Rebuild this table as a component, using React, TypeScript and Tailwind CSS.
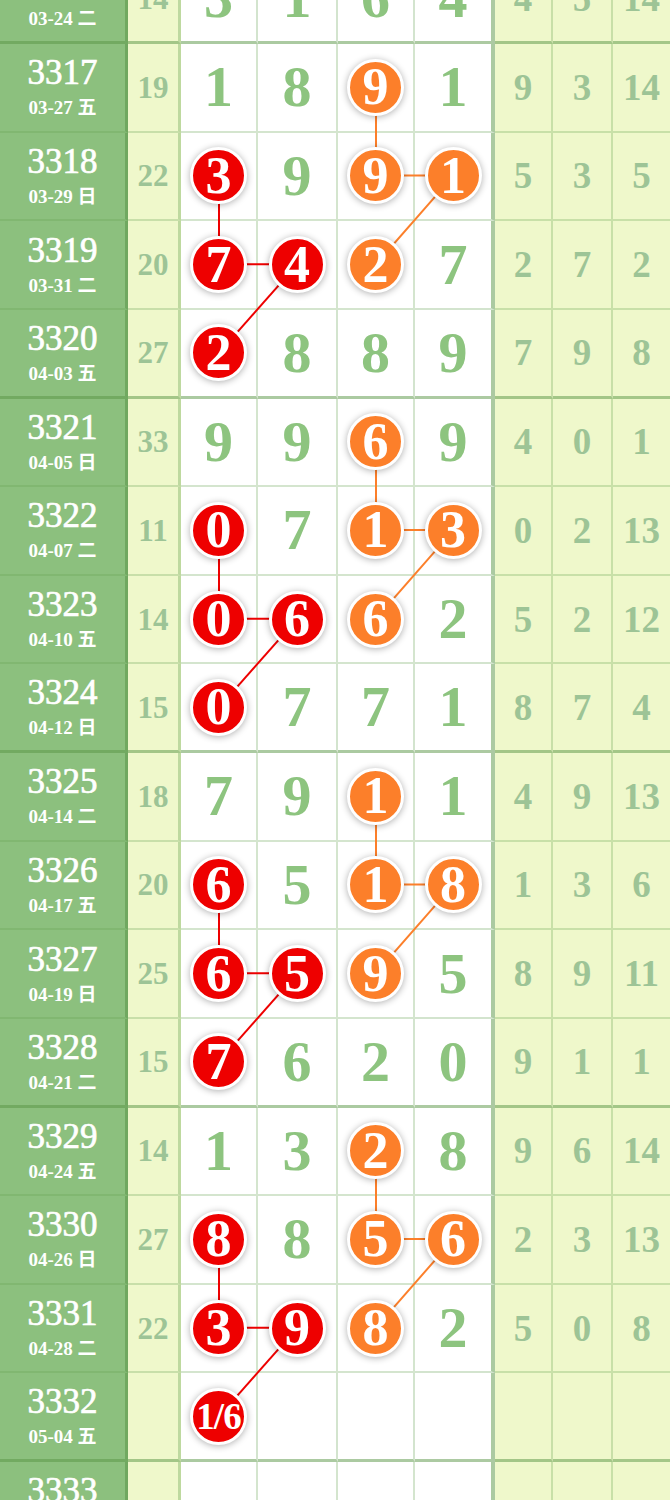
type Mark = "r" | "o" | undefined;

type Row = {
  id: string;
  date: string;
  sum: string;
  nums: string[];
  tail: string[];
};

const ROW_H = 88.625;
const COL_X = [219, 297.5, 376, 453.5];

const rows: Row[] = [
  { id: "3316", date: "03-24 二", sum: "14", nums: ["3", "1", "6", "4"], tail: ["4", "5", "14"] },
  { id: "3317", date: "03-27 五", sum: "19", nums: ["1", "8", "9o", "1"], tail: ["9", "3", "14"] },
  { id: "3318", date: "03-29 日", sum: "22", nums: ["3r", "9", "9o", "1o"], tail: ["5", "3", "5"] },
  { id: "3319", date: "03-31 二", sum: "20", nums: ["7r", "4r", "2o", "7"], tail: ["2", "7", "2"] },
  { id: "3320", date: "04-03 五", sum: "27", nums: ["2r", "8", "8", "9"], tail: ["7", "9", "8"] },
  { id: "3321", date: "04-05 日", sum: "33", nums: ["9", "9", "6o", "9"], tail: ["4", "0", "1"] },
  { id: "3322", date: "04-07 二", sum: "11", nums: ["0r", "7", "1o", "3o"], tail: ["0", "2", "13"] },
  { id: "3323", date: "04-10 五", sum: "14", nums: ["0r", "6r", "6o", "2"], tail: ["5", "2", "12"] },
  { id: "3324", date: "04-12 日", sum: "15", nums: ["0r", "7", "7", "1"], tail: ["8", "7", "4"] },
  { id: "3325", date: "04-14 二", sum: "18", nums: ["7", "9", "1o", "1"], tail: ["4", "9", "13"] },
  { id: "3326", date: "04-17 五", sum: "20", nums: ["6r", "5", "1o", "8o"], tail: ["1", "3", "6"] },
  { id: "3327", date: "04-19 日", sum: "25", nums: ["6r", "5r", "9o", "5"], tail: ["8", "9", "11"] },
  { id: "3328", date: "04-21 二", sum: "15", nums: ["7r", "6", "2", "0"], tail: ["9", "1", "1"] },
  { id: "3329", date: "04-24 五", sum: "14", nums: ["1", "3", "2o", "8"], tail: ["9", "6", "14"] },
  { id: "3330", date: "04-26 日", sum: "27", nums: ["8r", "8", "5o", "6o"], tail: ["2", "3", "13"] },
  { id: "3331", date: "04-28 二", sum: "22", nums: ["3r", "9r", "8o", "2"], tail: ["5", "0", "8"] },
  { id: "3332", date: "05-04 五", sum: "", nums: ["1/6r", "", "", ""], tail: ["", "", ""] },
  { id: "3333", date: "", sum: "", nums: ["", "", "", ""], tail: ["", "", ""] },
];

const parse = (s: string): { v: string; m: Mark } => {
  const last = s.slice(-1);
  if (last === "r" || last === "o") return { v: s.slice(0, -1), m: last };
  return { v: s, m: undefined };
};

// first row of each 4-row block: 3317, 3321, 3325, 3329
const groupStarts = [1, 5, 9, 13];

const cy = (i: number): number => i * ROW_H + ROW_H / 2 - 1;

const segments = groupStarts.flatMap((g) => [
  { c: "#fc7f2a", pts: [[2, g], [2, g + 1], [3, g + 1]] },
  { c: "#fc7f2a", pts: [[3, g + 1], [2, g + 2]] },
  { c: "#ee0000", pts: [[0, g + 1], [0, g + 2], [1, g + 2]] },
  { c: "#ee0000", pts: [[1, g + 2], [0, g + 3]] },
]);

const serif = "font-['Liberation_Serif','Noto_Sans_CJK_SC',serif]";

const Ball = ({ v, m }: { v: string; m: Mark }): React.ReactNode => (
  <div
    className={`relative z-10 flex h-[57px] w-[57px] items-center justify-center rounded-full border-[3px] border-white font-bold leading-none text-white shadow-[0_1px_7px_rgba(0,0,0,0.32)] ${
      m === "r" ? "bg-[#ee0000]" : "bg-[#fc7f2a]"
    } ${v.length > 1 ? "text-[37px] tracking-[-1px]" : "text-[52px]"}`}
  >
    {v}
  </div>
);

const App = (): React.ReactNode => {
  return (
    <div className={`h-[1500px] w-[670px] overflow-hidden bg-white ${serif}`}>
      <div className="relative mt-[-44.6px]">
        {rows.map((row, i) => {
          const groupEnd = i % 4 === 0;
          const bb = groupEnd
            ? "border-b-[3px] border-b-[rgba(90,150,70,0.5)]"
            : "border-b-2 border-b-[rgba(100,160,80,0.28)]";
          return (
            <div key={row.id} className="flex h-[88.625px]">
              <div
                className={`flex w-[128px] shrink-0 flex-col items-center justify-center border-r-[3px] border-r-[rgba(80,140,60,0.45)] bg-[#8cc07e] text-white ${bb}`}
              >
                <div className="h-[36px] text-[35px] leading-[36px] [-webkit-text-stroke:0.7px_white]">{row.id}</div>
                <div className="mt-[6px] h-[22px] text-[19px] font-bold leading-[22px]">{row.date}</div>
              </div>
              <div
                className={`flex w-[53px] shrink-0 items-center justify-center border-r-[3px] border-r-[rgba(100,160,80,0.35)] bg-[#eff8cb] text-[31px] font-bold leading-none text-[#9dc496] ${bb}`}
              >
                {row.sum}
              </div>
              {row.nums.map((n, j) => {
                const { v, m } = parse(n);
                const widths = ["w-[77px]", "w-[80px]", "w-[77px]", "w-[80px]"];
                const br =
                  j === 3
                    ? "border-r-4 border-r-[rgba(90,150,70,0.5)]"
                    : "border-r-2 border-r-[rgba(100,160,80,0.28)]";
                return (
                  <div
                    key={j}
                    className={`flex shrink-0 items-center justify-center bg-white text-[58px] font-bold leading-none text-[#8dc47f] ${widths[j]} ${br} ${bb}`}
                  >
                    {m ? <Ball v={v} m={m} /> : v}
                  </div>
                );
              })}
              {row.tail.map((t, j) => (
                <div
                  key={j}
                  className={`flex items-center justify-center bg-[#eff8cb] text-[37px] font-bold leading-none text-[#9dc496] ${
                    j === 0 ? "w-[58px] shrink-0" : j === 1 ? "w-[60px] shrink-0" : "flex-1"
                  } ${j < 2 ? "border-r-2 border-r-[rgba(100,160,80,0.28)]" : ""} ${bb}`}
                >
                  {t}
                </div>
              ))}
            </div>
          );
        })}
        <svg
          className="pointer-events-none absolute left-0 top-0 z-0"
          width={670}
          height={rows.length * ROW_H}
        >
          {segments.map((s, k) => (
            <polyline
              key={k}
              points={s.pts.map(([c, r]) => `${COL_X[c]},${cy(r)}`).join(" ")}
              fill="none"
              stroke={s.c}
              strokeWidth={2}
            />
          ))}
        </svg>
      </div>
    </div>
  );
};

export default App;
